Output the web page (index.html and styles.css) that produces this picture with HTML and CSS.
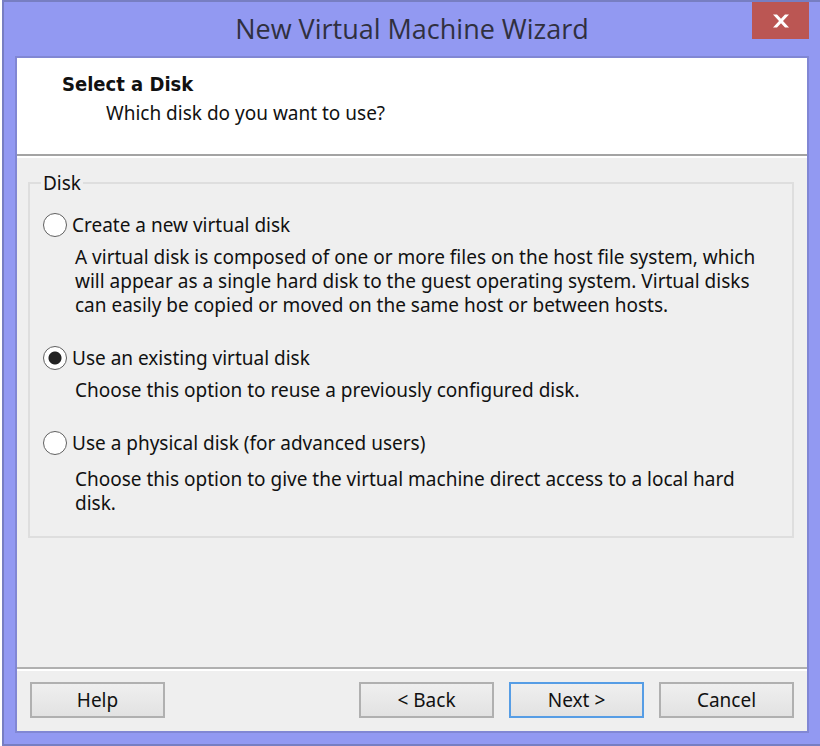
FILE: index.html
```html
<!DOCTYPE html>
<html lang="en">
<head>
<meta charset="utf-8">
<title>New Virtual Machine Wizard</title>
<link rel="stylesheet" href="styles.css">
</head>
<body>
<form class="window">
  <header class="titlebar">
    <h1 class="title">New Virtual Machine Wizard</h1>
    <button class="close" type="button" aria-label="Close">
      <svg width="16" height="14" viewBox="0 0 16 14" aria-hidden="true"><path d="M0 .5H4L8 4.800 12 .5H16L10 7 16 13.500H12L8 9.200 4 13.500H0L6 7Z" fill="#fff"/></svg>
    </button>
  </header>
  <main class="client">
    <section class="banner">
      <h2 class="heading">Select a Disk</h2>
      <p class="subheading">Which disk do you want to use?</p>
    </section>
    <section class="page">
      <fieldset class="group">
        <legend>Disk</legend>
        <div class="option">
          <label class="choice"><input type="radio" name="disk" aria-describedby="d1">Create a new virtual disk</label>
          <p class="description" id="d1">A virtual disk is composed of one or more files on the host file system, which<br>will appear as a single hard disk to the guest operating system. Virtual disks<br>can easily be copied or moved on the same host or between hosts.</p>
        </div>
        <div class="option">
          <label class="choice"><input type="radio" name="disk" aria-describedby="d2" checked>Use an existing virtual disk</label>
          <p class="description" id="d2">Choose this option to reuse a previously configured disk.</p>
        </div>
        <div class="option">
          <label class="choice"><input type="radio" name="disk" aria-describedby="d3">Use a physical disk (for advanced users)</label>
          <p class="description description-low" id="d3">Choose this option to give the virtual machine direct access to a local hard<br>disk.</p>
        </div>
      </fieldset>
    </section>
    <footer class="actions">
      <button class="button help" type="button">Help</button>
      <button class="button" type="button">&lt; Back</button>
      <button class="button primary" type="button">Next &gt;</button>
      <button class="button" type="button">Cancel</button>
    </footer>
  </main>
</form>
</body>
</html>
```
FILE: styles.css
```css
* { box-sizing: border-box; }

body {
  margin: 0;
  background: #fff;
  color: #111;
  font: 19px/24px "Noto Sans", "Open Sans", sans-serif;
}

h1, h2, p { margin: 0; }

.window {
  display: flex;
  flex-direction: column;
  min-height: 100vh;
  margin-left: 2px;
  padding: 0 11px 11px;
  background: #9299f2;
  border: 2px solid #777ec2;
  border-right: 0;
}

.titlebar {
  display: grid;
  grid-template-columns: 1fr auto 1fr;
  height: 54px;
}

.title {
  grid-column: 2;
  color: #303040;
  font: 27px/54px "Open Sans", "Noto Sans", sans-serif;
}

.close {
  display: flex;
  align-items: center;
  justify-content: center;
  justify-self: end;
  width: 57px;
  height: 37px;
  padding: 0;
  border: 0;
  background: #bb5653;
}

.client {
  display: flex;
  flex: 1;
  flex-direction: column;
  border: 2px solid #8187d4;
  background: #efefef;
}

.banner {
  height: 98px;
  padding: 14px 45px 0;
  background: #fff;
  border-bottom: 2px solid #a3a3a3;
}

.heading {
  font: bold 20px/24px "DejaVu Sans Condensed", sans-serif;
}

.subheading {
  padding: 5px 44px 0;
}

.page {
  flex: 1;
  padding: 13px 13px 13px 11px;
  border-top: 2px solid #fff;
}

.group {
  margin: 0;
  padding: 18px 11px 21px;
  border: 2px solid #dedede;
}

.group legend { padding: 0 2px; }

.option { padding: 0 2px; }

.option + .option { margin-top: 29px; }

.choice {
  display: flex;
  align-items: center;
  gap: 5px;
}

.choice input {
  appearance: none;
  width: 24px;
  height: 24px;
  margin: 0;
  border: 1px solid #606060;
  border-radius: 50%;
  background: #fff;
}

.choice input:checked {
  background: radial-gradient(circle, #222 6px, #fff 7px);
}

.description { padding: 8px 0 0 32px; }

.description-low { padding-top: 12px; }

.actions {
  display: flex;
  gap: 15px;
  padding: 13px 13px 13px;
  border-top: 2px solid #b0b0b0;
  box-shadow: inset 0 2px #fff;
}

.button {
  width: 135px;
  height: 36px;
  padding: 0;
  border: 2px solid #b0b0b0;
  background: linear-gradient(#efefef, #e2e2e2);
  color: inherit;
  font: inherit;
}

.help { margin-right: auto; }

.primary { border-color: #569de5; }
```
